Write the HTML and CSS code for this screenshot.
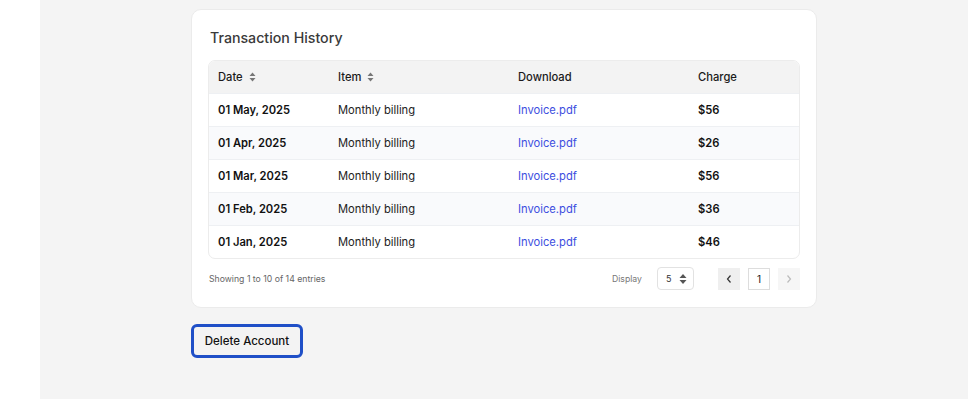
FILE: index.html
```html
<!DOCTYPE html>
<html>
    <head>
        <link rel="stylesheet" href="styles.css">
    </head>
    <body>
        <div class="side"></div>
        <div class="main">
            <div class="card">
                <h3 class="title">Transaction History</h3>
                <div class="table-wrap">
                    <table>
                        <thead>
                            <tr>
                                <th class="c-date">Date <span class="sort"><svg width="7" height="10" viewBox="0 0 7 10"><path d="M3.5 0.5 L6.5 4 H0.5 Z M3.5 9.5 L6.5 6 H0.5 Z" fill="#777"/></svg></span></th>
                                <th class="c-item">Item <span class="sort"><svg width="7" height="10" viewBox="0 0 7 10"><path d="M3.5 0.5 L6.5 4 H0.5 Z M3.5 9.5 L6.5 6 H0.5 Z" fill="#777"/></svg></span></th>
                                <th class="c-dl">Download</th>
                                <th>Charge</th>
                            </tr>
                        </thead>
                        <tbody>
                            <tr><td class="date">01 May, 2025</td><td>Monthly billing</td><td><a href="#">Invoice.pdf</a></td><td class="amt">$56</td></tr>
                            <tr><td class="date">01 Apr, 2025</td><td>Monthly billing</td><td><a href="#">Invoice.pdf</a></td><td class="amt">$26</td></tr>
                            <tr><td class="date">01 Mar, 2025</td><td>Monthly billing</td><td><a href="#">Invoice.pdf</a></td><td class="amt">$56</td></tr>
                            <tr><td class="date">01 Feb, 2025</td><td>Monthly billing</td><td><a href="#">Invoice.pdf</a></td><td class="amt">$36</td></tr>
                            <tr><td class="date">01 Jan, 2025</td><td>Monthly billing</td><td><a href="#">Invoice.pdf</a></td><td class="amt">$46</td></tr>
                        </tbody>
                    </table>
                </div>
                <div class="footer">
                    <span class="showing">Showing 1 to 10 of 14 entries</span>
                    <div class="pager">
                        <span class="display">Display</span>
                        <div class="select">
                            <span>5</span>
                            <svg width="8" height="12" viewBox="0 0 8 12"><path d="M4 1 L7.5 5 H0.5 Z M4 11 L7.5 7 H0.5 Z" fill="#555"/></svg>
                        </div>
                        <div class="pages">
                            <button class="pg prev"><svg width="8" height="10" viewBox="0 0 8 10"><path d="M5.5 1.5 L2.5 5 L5.5 8.5" fill="none" stroke="#333" stroke-width="1.2"/></svg></button>
                            <button class="pg cur">1</button>
                            <button class="pg next"><svg width="8" height="10" viewBox="0 0 8 10"><path d="M2.5 1.5 L5.5 5 L2.5 8.5" fill="none" stroke="#bbb" stroke-width="1.2"/></svg></button>
                        </div>
                    </div>
                </div>
            </div>
            <button class="delete">Delete Account</button>
        </div>
    </body>
</html>
```

FILE: styles.css
```css
html, body {
    margin: 0;
    height: 100%;
}
body {
    display: flex;
    font-family: Inter, "Noto Sans", sans-serif;
    color: #111;
}
.side {
    width: 40px;
    background: #fff;
}
.main {
    flex-grow: 1;
    background: #f4f4f4;
    padding: 9px 0 0 151px;
}
.card {
    width: 626px;
    box-sizing: border-box;
    background: #fff;
    border: solid 1px #ebebeb;
    border-radius: 10px;
    padding: 18px 16px 17px 16px;
}
.title {
    margin: 0 0 12px 2px;
    font-size: 14.2px;
    font-weight: 500;
    color: #3a3a3a;
    line-height: 20px;
}
.table-wrap {
    border: solid 1px #ececec;
    border-radius: 7px;
    overflow: hidden;
}
table {
    width: 100%;
    border-collapse: collapse;
    font-size: 11.2px;
}
th {
    background: #f3f3f3;
    text-align: left;
    font-weight: 500;
    height: 32px;
    padding: 0 0 0 9px;
    color: #1a1a1a;
}
.c-date { width: 111px; }
.c-item { width: 171px; }
.c-dl { width: 171px; }
.sort {
    margin-left: 3px;
    vertical-align: -1px;
}
td {
    height: 32px;
    padding: 0 0 0 9px;
    border-top: solid 1px #eef0f3;
    color: #222;
}
tbody tr:nth-child(even) {
    background: #f9fafc;
}
.date, .amt {
    font-weight: 600;
    color: #111;
}
td a {
    color: #3d4ee0;
    text-decoration: none;
}
.footer {
    display: flex;
    justify-content: space-between;
    align-items: center;
    margin-top: 8px;
    padding-left: 1px;
}
.showing {
    font-size: 8.7px;
    color: #666;
}
.pager {
    display: flex;
    align-items: center;
}
.display {
    font-size: 8.7px;
    color: #777;
    margin-right: 15px;
}
.select {
    width: 37px;
    height: 23px;
    box-sizing: border-box;
    border: solid 1px #e2e2e2;
    border-radius: 4px;
    display: flex;
    align-items: center;
    justify-content: space-between;
    padding: 0 6px 0 8px;
    font-size: 9px;
    color: #333;
}
.pages {
    display: flex;
    gap: 8px;
    margin-left: 24px;
}
.pg {
    width: 22px;
    height: 22px;
    box-sizing: border-box;
    border: none;
    padding: 0;
    font-family: inherit;
    font-size: 10px;
    display: flex;
    align-items: center;
    justify-content: center;
}
.prev {
    background: #efefef;
}
.cur {
    background: #fff;
    border: solid 1px #ddd;
    color: #222;
}
.next {
    background: #f6f6f6;
}
.delete {
    display: block;
    margin-top: 16px;
    width: 112px;
    height: 34px;
    box-sizing: border-box;
    background: #f3f3f3;
    border: solid 3px #1f4fc7;
    border-radius: 6px;
    font-family: inherit;
    font-size: 11.5px;
    font-weight: 500;
    color: #111;
    padding: 0;
}
```
